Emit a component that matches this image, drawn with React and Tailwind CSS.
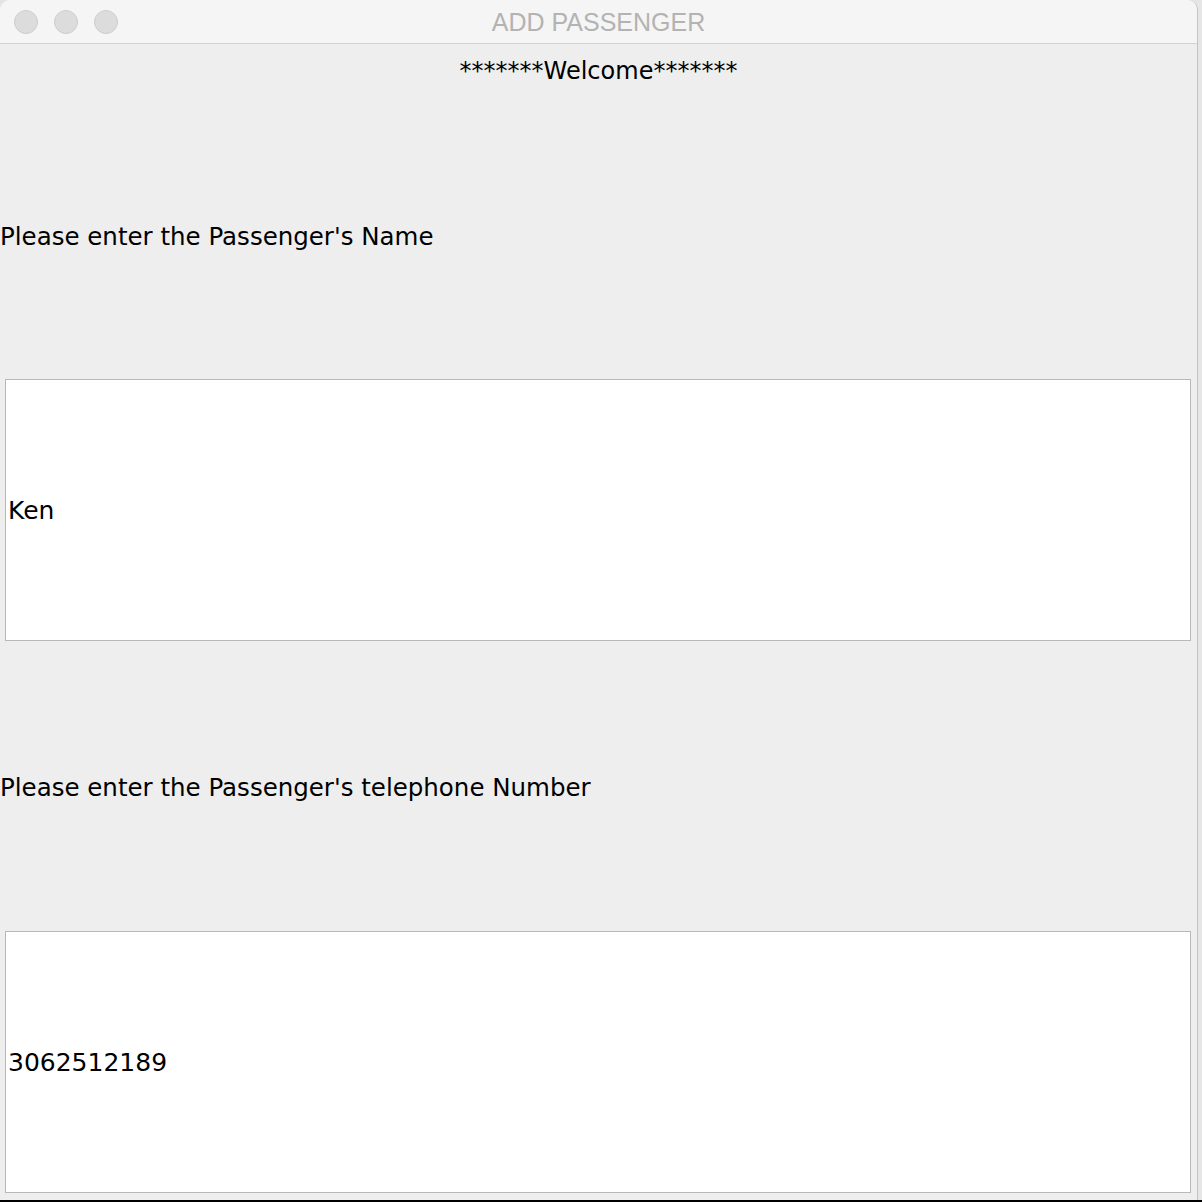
export default function App() {
  const body = { fontFamily: '"DejaVu Sans", "Lucida Grande", Verdana, sans-serif' };

  return (
    <div className="w-[1202px] h-[1202px] bg-[#e4e4e4] flex flex-col overflow-hidden">
      <div className="flex flex-1">
        {/* window */}
        <div className="w-[1198px] h-[1200px] flex flex-col bg-[#eeeeee] rounded-t-[10px] overflow-hidden border-r border-[#c4c4c4]">
          {/* title bar */}
          <div className="relative h-[44px] shrink-0 bg-[#f5f5f5] border-b border-[#d2d2d2] flex items-center justify-center">
            <div className="absolute left-[14px] top-[10px] flex gap-[16px]">
              <span className="w-[24px] h-[24px] rounded-full bg-[#dcdcdc] border border-[#cdcdcd]" />
              <span className="w-[24px] h-[24px] rounded-full bg-[#dcdcdc] border border-[#cdcdcd]" />
              <span className="w-[24px] h-[24px] rounded-full bg-[#dcdcdc] border border-[#cdcdcd]" />
            </div>
            <span
              className="text-[25px] text-[#b3b3b3] leading-none pt-[2px]"
              style={{ fontFamily: '"Liberation Sans", Arial, sans-serif' }}
            >
              ADD PASSENGER
            </span>
          </div>

          {/* content */}
          <div className="flex flex-col flex-1 text-black" style={body}>
            <div className="h-[54px] flex items-center justify-center text-[24px]">*******Welcome*******</div>
            <div className="h-[276px] flex items-center text-[24.5px] pt-[2px]">Please enter the Passenger's Name</div>
            <div className="h-[5px]" />
            <div className="mx-[5px] mr-[6px] h-[262px] bg-white border border-[#b8b8b8] flex items-center pl-[2px] text-[25px] pt-[2px]">
              Ken
            </div>
            <div className="h-[290px] flex items-center text-[24.5px] pt-[4px]">Please enter the Passenger's telephone Number</div>
            <div className="mx-[5px] mr-[6px] h-[262px] bg-white border border-[#b8b8b8] flex items-center pl-[2px] text-[25px] pt-[2px]">
              3062512189
            </div>
          </div>
        </div>
        {/* desktop strip */}
        <div className="flex-1 bg-[#e6e6e6]" />
      </div>
      <div className="h-[2px] bg-black" />
    </div>
  );
}
